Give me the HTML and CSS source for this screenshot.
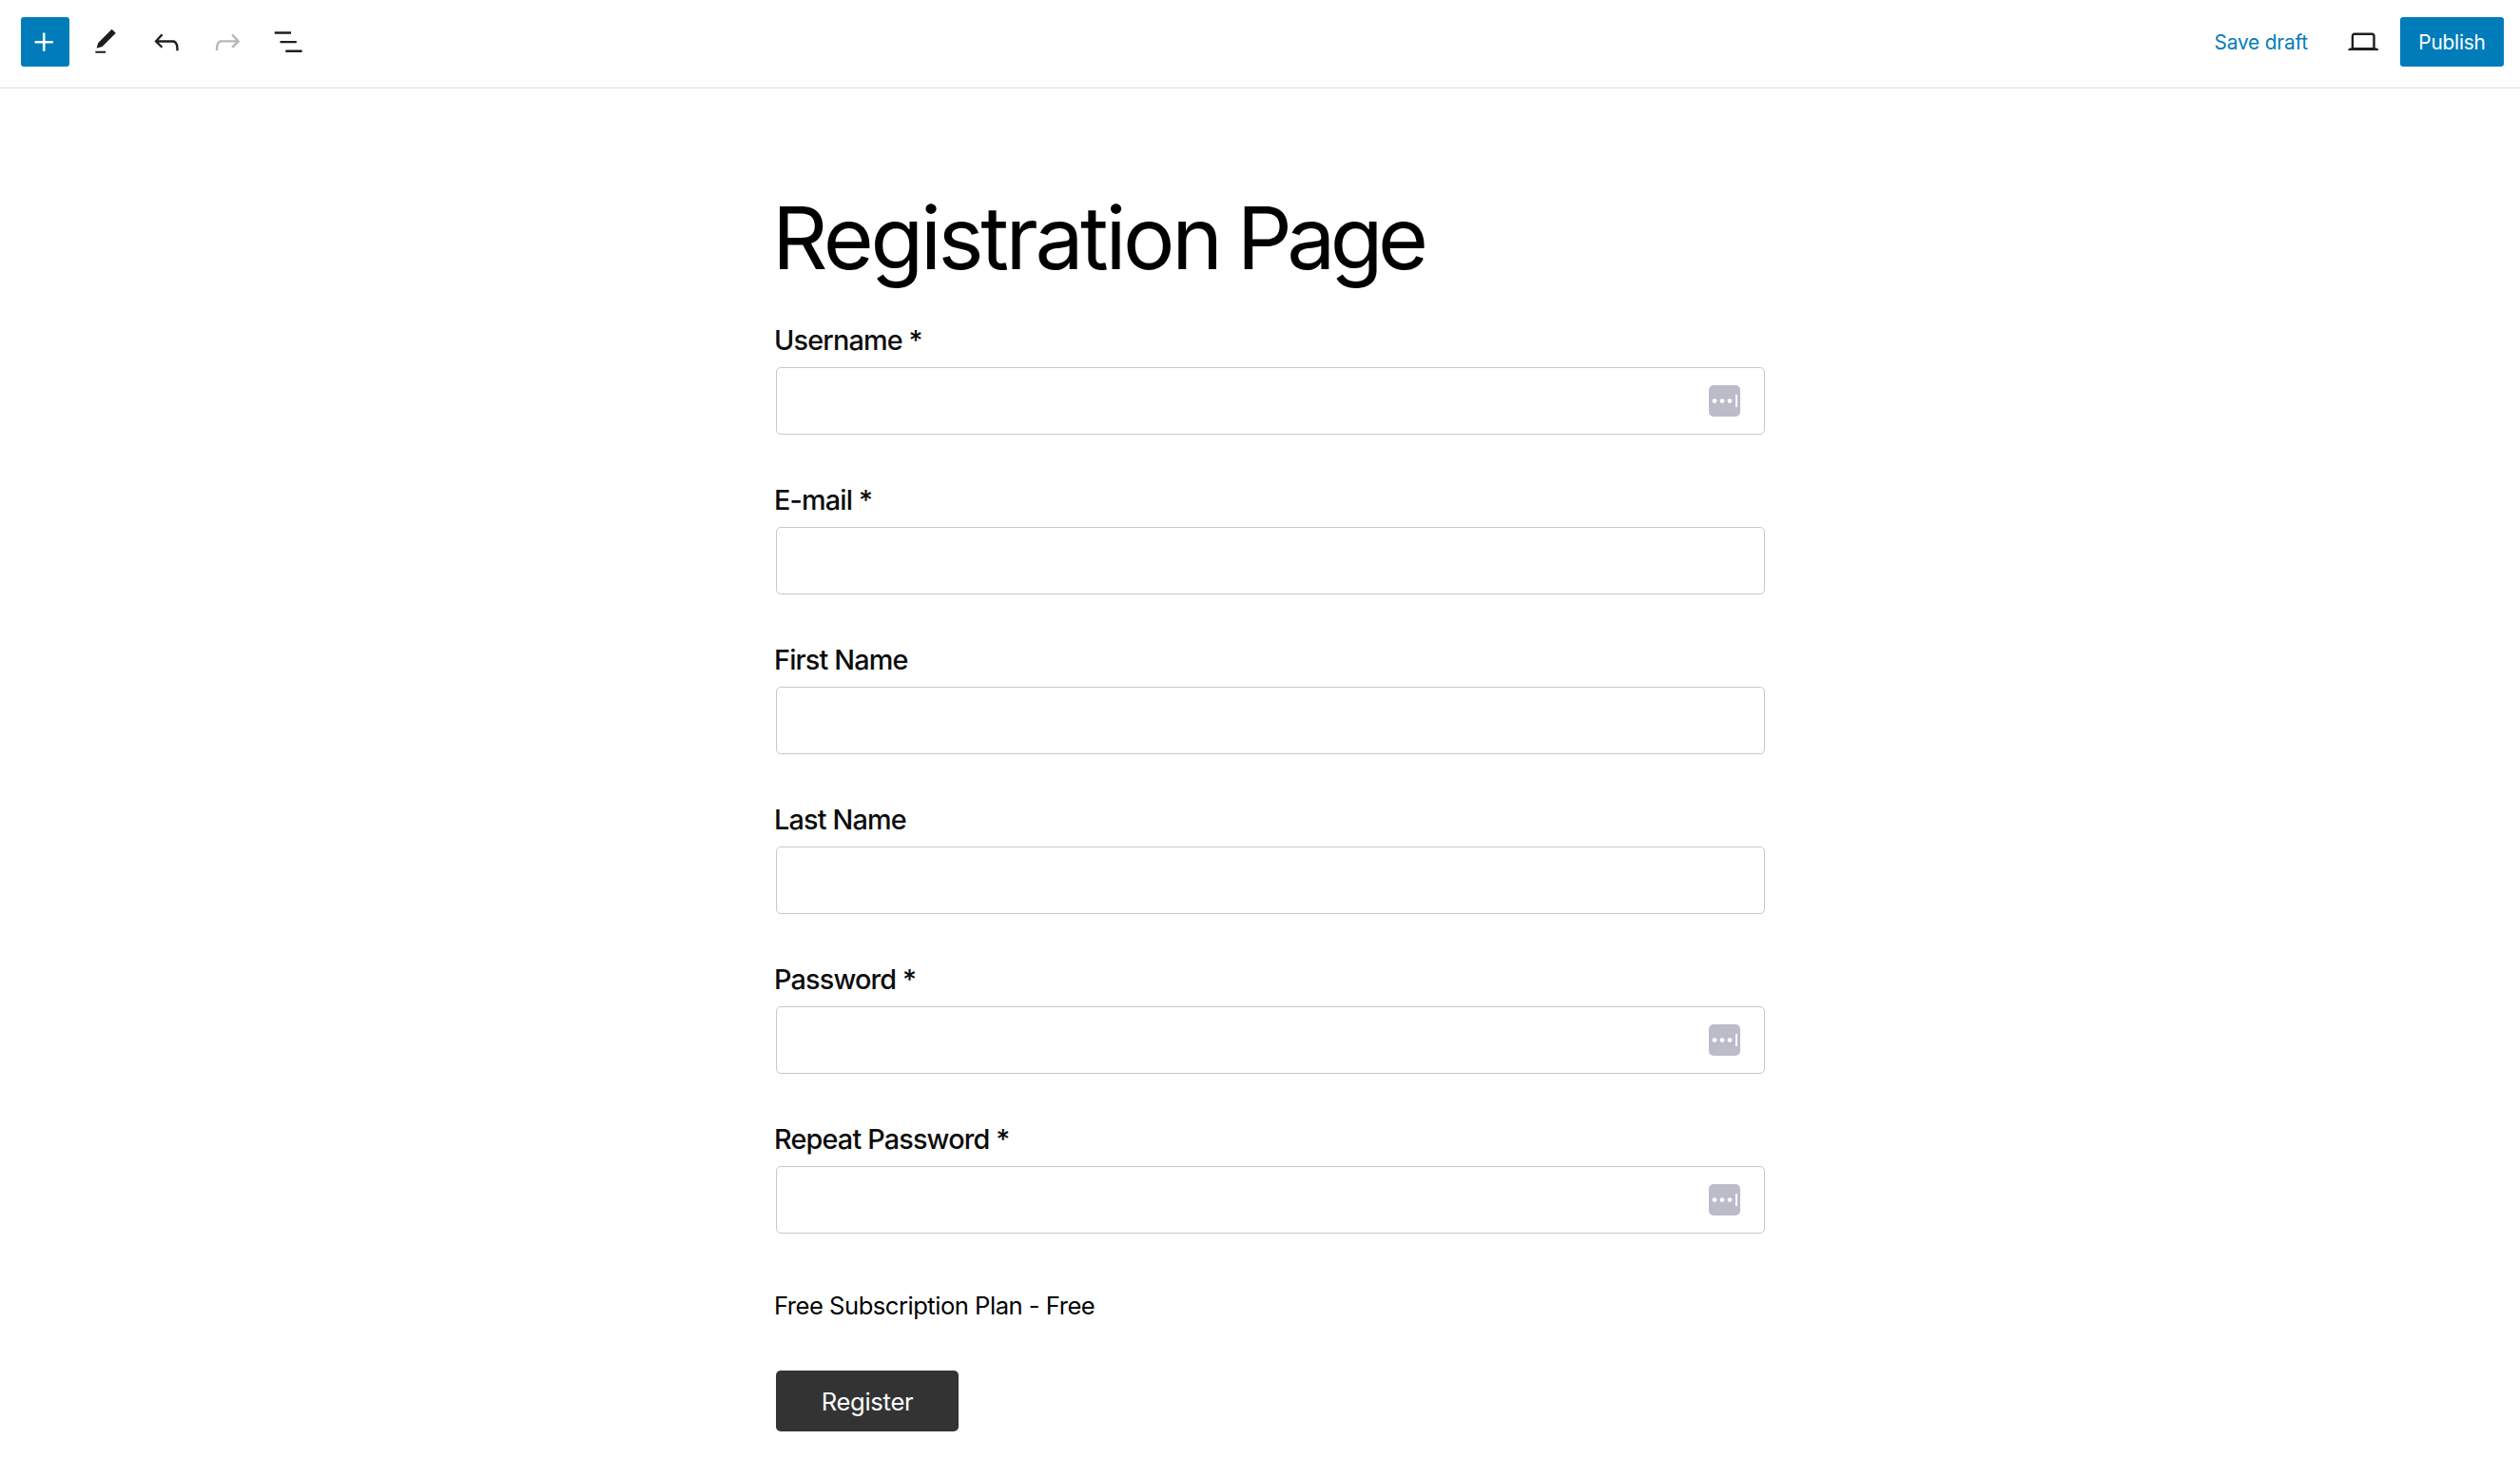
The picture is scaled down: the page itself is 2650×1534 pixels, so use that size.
FILE: index.html
```html
<!DOCTYPE html>
<html lang="en">
<head>
<meta charset="utf-8">
<title>Registration Page</title>
<link rel="stylesheet" href="styles.css">
</head>
<body>
<header class="toolbar">
  <div class="tools">
    <button class="add" aria-label="Add block"><svg class="icon" viewBox="0 0 24 24"><path d="M18 11.2h-5.2V6h-1.6v5.2H6v1.6h5.2V18h1.6v-5.2H18z"/></svg></button>
    <button class="tool" aria-label="Tools"><svg class="icon small" viewBox="0 0 24 24"><path d="M20.1 5.1L16.9 2 6.2 12.7l-1.3 4.4 4.5-1.3L20.1 5.1zM4 20.8h8v-1.5H4v1.5z"/></svg></button>
    <button class="tool" aria-label="Undo"><svg class="icon" viewBox="0 0 24 24"><path d="M18.3 11.7c-.6-.6-1.4-.9-2.3-.9H6.7l2.9-3.3-1.1-1-4.5 5L8.5 16l1-1-2.7-2.7H16c.5 0 .9.2 1.3.5 1 1 1 3.4 1 4.5v.3h1.5v-.2c0-1.5 0-4.3-1.5-5.7z"/></svg></button>
    <button class="tool disabled" aria-label="Redo"><svg class="icon" viewBox="0 0 24 24"><path d="M15.6 6.5l-1.1 1 2.9 3.3H8c-.9 0-1.7.3-2.3.9-1.4 1.5-1.4 4.2-1.4 5.6v.2h1.5v-.3c0-1.1 0-3.5 1-4.5.3-.3.7-.5 1.3-.5h9.2L14.5 15l1.1 1.1 4.6-4.6-4.6-5z"/></svg></button>
    <button class="tool" aria-label="List view"><svg class="icon" viewBox="0 0 24 24"><path d="M13.8 5.2H3v1.5h10.8V5.2zm-3.6 12v1.5H21v-1.5H10.2zm7.2-6H6.6v1.5h10.8v-1.5z"/></svg></button>
  </div>
  <div class="actions">
    <button class="save">Save draft</button>
    <button class="preview" aria-label="Preview"><svg class="icon" viewBox="0 0 24 24"><path d="M20.5 16h-.7V8c0-1.1-.9-2-2-2H6.2c-1.1 0-2 .9-2 2v8h-.7c-.8 0-1.5.7-1.5 1.5h20c0-.8-.7-1.5-1.5-1.5zM5.7 8c0-.3.2-.5.5-.5h11.6c.3 0 .5.2.5.5v7.6H5.7V8z"/></svg></button>
    <button class="publish">Publish</button>
  </div>
</header>
<main class="page">
  <h1 class="title">Registration <span class="title-end">Page</span></h1>
  <form class="form">
    <div class="field"><label class="label" for="user">Username *</label><div class="box"><input class="input" id="user"><svg class="fill" viewBox="0 0 33 33"><rect class="plate" width="33" height="33" rx="5"/><circle cx="6" cy="16.6" r="2.4"/><circle cx="14" cy="16.6" r="2.4"/><circle cx="22" cy="16.6" r="2.4"/><path d="M28 10h2v13h-2z"/></svg></div></div>
    <div class="field"><label class="label" for="mail">E-mail *</label><div class="box"><input class="input" id="mail"></div></div>
    <div class="field"><label class="label" for="first">First Name</label><div class="box"><input class="input" id="first"></div></div>
    <div class="field"><label class="label" for="last">Last Name</label><div class="box"><input class="input" id="last"></div></div>
    <div class="field"><label class="label" for="pass">Password *</label><div class="box"><input class="input" id="pass" type="password"><svg class="fill" viewBox="0 0 33 33"><rect class="plate" width="33" height="33" rx="5"/><circle cx="6" cy="16.6" r="2.4"/><circle cx="14" cy="16.6" r="2.4"/><circle cx="22" cy="16.6" r="2.4"/><path d="M28 10h2v13h-2z"/></svg></div></div>
    <div class="field"><label class="label" for="repeat">Repeat Password *</label><div class="box"><input class="input" id="repeat" type="password"><svg class="fill" viewBox="0 0 33 33"><rect class="plate" width="33" height="33" rx="5"/><circle cx="6" cy="16.6" r="2.4"/><circle cx="14" cy="16.6" r="2.4"/><circle cx="22" cy="16.6" r="2.4"/><path d="M28 10h2v13h-2z"/></svg></div></div>
    <p class="plan"><span class="plan-name">Free Subscription Plan - Free</span></p>
    <button class="register" type="button"><span class="register-text">Register</span></button>
  </form>
</main>
</body>
</html>
```
FILE: styles.css
```css
* { box-sizing: border-box; }
body {
  margin: 0;
  height: 1534px;
  overflow: hidden;
  background: #fff;
  color: #000;
  font-family: Inter, "Liberation Sans", sans-serif;
}
button {
  display: flex;
  align-items: center;
  justify-content: center;
  padding: 0;
  border: 0;
  background: none;
  color: #1e1e1e;
  font: inherit;
  white-space: nowrap;
}
.toolbar {
  display: flex;
  justify-content: space-between;
  align-items: center;
  height: 93px;
  padding: 0 17px 4px 22px;
  border-bottom: 1px solid #dcdcdc;
}
.tools, .actions { display: flex; align-items: center; }
.icon { display: block; width: 38.4px; height: 38.4px; fill: currentColor; }
.icon.small { width: 32px; height: 32px; }
.add {
  width: 51px;
  height: 52px;
  margin-right: 6px;
  padding-right: 2px;
  border-radius: 3px;
  background: #007cba;
  color: #fff;
}
.tool { width: 64px; height: 52px; }
.disabled { color: #b8b8b8; }
.save { padding-top: 1px; font-size: 20.8px; letter-spacing: -0.15px; color: #007cba; }
.preview { width: 52px; height: 52px; margin: 0 13px 0 32px; }
.publish {
  width: 109px;
  height: 52px;
  padding-top: 1px;
  border-radius: 3px;
  background: #007cba;
  color: #fff;
  font-size: 20.8px;
  letter-spacing: -0.2px;
}
.page { width: 1042px; margin-left: 814px; padding-top: 101px; }
.title {
  margin: 0 0 0 -2px;
  height: 112px;
  line-height: 112px;
  font-size: 91px;
  font-weight: 430;
  letter-spacing: -3.4px;
  word-spacing: -4px;
  white-space: nowrap;
}
.title-end { letter-spacing: -5.6px; }
.form { padding-top: 29px; }
.field { height: 168px; }
.label {
  display: block;
  height: 51px;
  line-height: 46px;
  font-size: 28.8px;
  font-weight: 500;
  letter-spacing: -0.83px;
  color: #0c0c0c;
}
.box {
  display: flex;
  align-items: center;
  height: 71px;
  margin-left: 2px;
  padding-right: 25px;
  border: 1px solid #c8c8c8;
  border-radius: 5px;
}
.input {
  flex: 1;
  height: 100%;
  padding: 0 20px;
  border: 0;
  background: none;
  font: inherit;
  font-size: 26px;
}
.fill { width: 33px; height: 33px; fill: #fff; }
.plate { fill: #bbbbca; }
.plan { margin: 0; height: 98px; line-height: 60px; font-size: 25.6px; }
.plan-name { letter-spacing: -0.5px; }
.register {
  width: 192px;
  height: 64px;
  margin-left: 2px;
  border-radius: 5px;
  background: #333;
  color: #fff;
  font-size: 25.6px;
}
.register-text { padding-top: 1px; letter-spacing: -0.3px; }
```
